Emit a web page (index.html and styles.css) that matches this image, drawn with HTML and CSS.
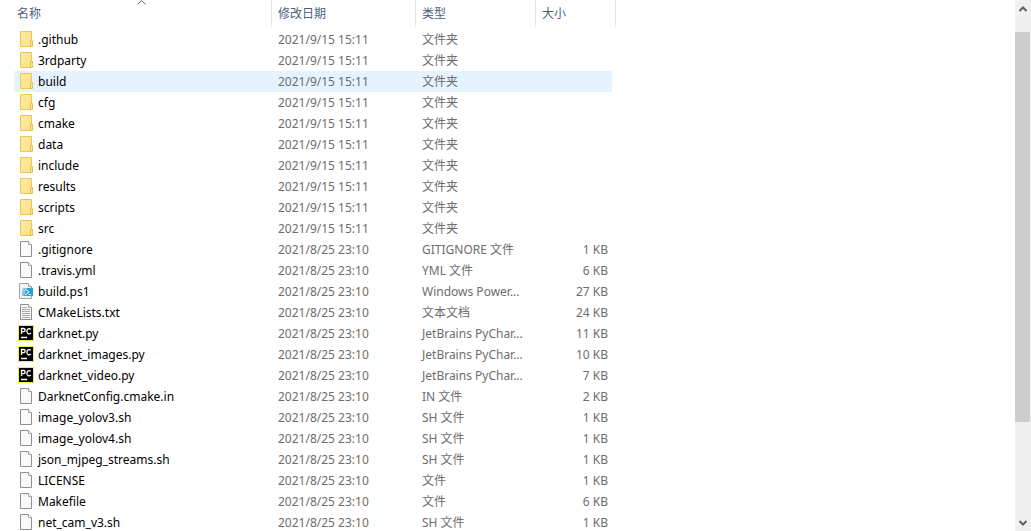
FILE: index.html
```html
<!DOCTYPE html>
<html lang="zh-CN">
<head>
	<meta charset="utf-8">
	<meta name="viewport" content="width=device-width, initial-scale=1.0">
	<title>darknet</title>
	<link rel="stylesheet" href="styles.css">
</head>
<body>
	<svg class="sprite" aria-hidden="true">
		<linearGradient id="fold" x1="0" y1="0" x2="1" y2="1">
			<stop offset="0" stop-color="#ffeaa3"/>
			<stop offset="1" stop-color="#fde08a"/>
		</linearGradient>
		<symbol id="folder" viewBox="0 0 16 16">
			<path d="M2.5.5h11v15h-11z" fill="url(#fold)" stroke="#ebc84f"/>
			<path d="M12.5 9.5h2v6h-2z" fill="#ffe694" stroke="#e8c13f"/>
		</symbol>
		<symbol id="file" viewBox="0 0 16 16">
			<path d="M2.5.5h8l3 3v12h-11z" fill="#f8f9f9" stroke="#8f8f8f"/>
			<path d="M10.5.5v3h3" fill="#fff" stroke="#a5a5a5"/>
		</symbol>
		<symbol id="text" viewBox="0 0 16 16">
			<path d="M2.5.5h8l3 3v12h-11z" fill="#f8f9f9" stroke="#8f8f8f"/>
			<path d="M10.5.5v3h3" fill="#fff" stroke="#a5a5a5"/>
			<path d="M4 3.5h5M4 5.5h8M4 7.5h8M4 9.5h8M4 11.5h8M4 13.5h8" stroke="#a8a8a8"/>
		</symbol>
		<symbol id="ps" viewBox="0 0 16 16">
			<path d="M1.5.5h9l3 3v12h-12z" fill="#f1f3f4" stroke="#a3a3a3"/>
			<path d="M10.5.5v3h3" fill="#fff" stroke="#a5a5a5"/>
			<path d="M5 5h10v8H4z" fill="#2b9fd8"/>
			<path d="M5 5h4l-3 8H4z" fill="#8cc4e4"/>
			<path d="M8 6.500l3 2.500-4 3M10.500 11.500h2.500" fill="none" stroke="#fff"/>
		</symbol>
		<symbol id="pycharm" viewBox="0 0 16 16">
			<path d="M0 0h16v16H0z" fill="#f3f32b"/>
			<path d="M1 1h14v14H1z" fill="#000"/>
			<path d="M3.500 9V3.500h2a1.500 1.500 0 0 1 0 3.200h-2M12.800 4.300c-1.800-1.500-3.900-.4-3.900 1.900s2.100 3.500 3.900 1.900M3 12.500h6" fill="none" stroke="#fff" stroke-width="1.300"/>
		</symbol>
	</svg>
	<div class="explorer">
		<div class="list">
			<table class="files">
				<colgroup>
					<col class="col-name"><col class="col-date"><col class="col-type"><col class="col-size">
				</colgroup>
				<thead>
					<tr>
						<th aria-sort="ascending">名称<svg class="sort" viewBox="0 0 9 5"><path d="M.5 4.500l4-4 4 4"/></svg></th>
						<th>修改日期</th>
						<th>类型</th>
						<th>大小</th>
					</tr>
				</thead>
				<tbody>
					<tr><td><span class="name"><svg><use href="#folder"/></svg>.github</span></td><td>2021/9/15 15:11</td><td>文件夹</td><td></td></tr>
					<tr><td><span class="name"><svg><use href="#folder"/></svg>3rdparty</span></td><td>2021/9/15 15:11</td><td>文件夹</td><td></td></tr>
					<tr class="active"><td><span class="name"><svg><use href="#folder"/></svg>build</span></td><td>2021/9/15 15:11</td><td>文件夹</td><td></td></tr>
					<tr><td><span class="name"><svg><use href="#folder"/></svg>cfg</span></td><td>2021/9/15 15:11</td><td>文件夹</td><td></td></tr>
					<tr><td><span class="name"><svg><use href="#folder"/></svg>cmake</span></td><td>2021/9/15 15:11</td><td>文件夹</td><td></td></tr>
					<tr><td><span class="name"><svg><use href="#folder"/></svg>data</span></td><td>2021/9/15 15:11</td><td>文件夹</td><td></td></tr>
					<tr><td><span class="name"><svg><use href="#folder"/></svg>include</span></td><td>2021/9/15 15:11</td><td>文件夹</td><td></td></tr>
					<tr><td><span class="name"><svg><use href="#folder"/></svg>results</span></td><td>2021/9/15 15:11</td><td>文件夹</td><td></td></tr>
					<tr><td><span class="name"><svg><use href="#folder"/></svg>scripts</span></td><td>2021/9/15 15:11</td><td>文件夹</td><td></td></tr>
					<tr><td><span class="name"><svg><use href="#folder"/></svg>src</span></td><td>2021/9/15 15:11</td><td>文件夹</td><td></td></tr>
					<tr><td><span class="name"><svg><use href="#file"/></svg>.gitignore</span></td><td>2021/8/25 23:10</td><td>GITIGNORE 文件</td><td>1 KB</td></tr>
					<tr><td><span class="name"><svg><use href="#file"/></svg>.travis.yml</span></td><td>2021/8/25 23:10</td><td>YML 文件</td><td>6 KB</td></tr>
					<tr><td><span class="name"><svg><use href="#ps"/></svg>build.ps1</span></td><td>2021/8/25 23:10</td><td>Windows Power...</td><td>27 KB</td></tr>
					<tr><td><span class="name"><svg><use href="#text"/></svg>CMakeLists.txt</span></td><td>2021/8/25 23:10</td><td>文本文档</td><td>24 KB</td></tr>
					<tr><td><span class="name"><svg><use href="#pycharm"/></svg>darknet.py</span></td><td>2021/8/25 23:10</td><td>JetBrains PyChar...</td><td>11 KB</td></tr>
					<tr><td><span class="name"><svg><use href="#pycharm"/></svg>darknet_images.py</span></td><td>2021/8/25 23:10</td><td>JetBrains PyChar...</td><td>10 KB</td></tr>
					<tr><td><span class="name"><svg><use href="#pycharm"/></svg>darknet_video.py</span></td><td>2021/8/25 23:10</td><td>JetBrains PyChar...</td><td>7 KB</td></tr>
					<tr><td><span class="name"><svg><use href="#file"/></svg>DarknetConfig.cmake.in</span></td><td>2021/8/25 23:10</td><td>IN 文件</td><td>2 KB</td></tr>
					<tr><td><span class="name"><svg><use href="#file"/></svg>image_yolov3.sh</span></td><td>2021/8/25 23:10</td><td>SH 文件</td><td>1 KB</td></tr>
					<tr><td><span class="name"><svg><use href="#file"/></svg>image_yolov4.sh</span></td><td>2021/8/25 23:10</td><td>SH 文件</td><td>1 KB</td></tr>
					<tr><td><span class="name"><svg><use href="#file"/></svg>json_mjpeg_streams.sh</span></td><td>2021/8/25 23:10</td><td>SH 文件</td><td>1 KB</td></tr>
					<tr><td><span class="name"><svg><use href="#file"/></svg>LICENSE</span></td><td>2021/8/25 23:10</td><td>文件</td><td>1 KB</td></tr>
					<tr><td><span class="name"><svg><use href="#file"/></svg>Makefile</span></td><td>2021/8/25 23:10</td><td>文件</td><td>6 KB</td></tr>
					<tr><td><span class="name"><svg><use href="#file"/></svg>net_cam_v3.sh</span></td><td>2021/8/25 23:10</td><td>SH 文件</td><td>1 KB</td></tr>
				</tbody>
			</table>
		</div>
		<div class="scrollbar">
			<button class="arrow up" aria-label="向上滚动"><svg viewBox="0 0 8 6"><path d="M.5 5L4 1.500 7.500 5"/></svg></button>
			<div class="track"><div class="thumb"></div></div>
			<button class="arrow" aria-label="向下滚动"><svg viewBox="0 0 8 6"><path d="M.5 1L4 4.500 7.500 1"/></svg></button>
		</div>
	</div>
</body>
</html>
```

FILE: styles.css
```css
*{
	padding: 0;
	margin: 0;
	box-sizing: border-box;
}
body{
	font-family: "Noto Sans", "Noto Sans CJK SC", sans-serif;
	font-size: 12px;
	line-height: 21px;
	background-color: #fff;
	color: #6d6d6d;
}
.sprite{
	position: absolute;
	width: 0;
	height: 0;
}
.explorer{
	display: flex;
	height: 100vh;
	overflow: hidden;
}
.list{
	flex: 1;
	padding-left: 14px;
	overflow: hidden;
}

/* file table */
.files{
	width: 602px;
	table-layout: fixed;
	border-collapse: separate;
	border-spacing: 0;
	white-space: nowrap;
}
.col-name{
	width: 258px;
}
.col-date{
	width: 144px;
}
.col-type{
	width: 120px;
}
.col-size{
	width: 80px;
}
th{
	position: relative;
	height: 27px;
	padding-left: 6px;
	border-right: 1px solid #e5e5e5;
	font-weight: normal;
	text-align: left;
	color: #4c607a;
}
th:first-child{
	padding-left: 3px;
}
.sort{
	position: absolute;
	top: 0;
	left: 50%;
	width: 9px;
	height: 5px;
	margin-left: -6px;
	fill: none;
	stroke: #666;
}
tbody::before{
	content: "";
	display: block;
	height: 2px;
}
td{
	height: 21px;
	padding-left: 6px;
	vertical-align: top;
}
td:first-child{
	padding-left: 4px;
	color: #000;
}
td:last-child{
	padding-right: 8px;
	text-align: right;
}
.name{
	display: flex;
	align-items: flex-start;
	gap: 4px;
}
.name svg{
	width: 16px;
	height: 16px;
	margin-top: 2px;
}
.active{
	background: linear-gradient(#e5f3ff, #e5f3ff) no-repeat;
	background-size: calc(100% - 4px) 100%;
}

/* scrollbar */
.scrollbar{
	display: flex;
	flex-direction: column;
	width: 16px;
	background-color: #f0f0f0;
}
.arrow{
	display: flex;
	align-items: center;
	justify-content: center;
	height: 17px;
	border: none;
	background: none;
}
.up{
	height: 32px;
	padding-bottom: 14px;
}
.arrow svg{
	width: 8px;
	height: 6px;
	fill: none;
	stroke: #606060;
	stroke-width: 2;
}
.track{
	flex: 1;
}
.thumb{
	width: 15px;
	height: 81%;
	background-color: #cdcdcd;
}
```
